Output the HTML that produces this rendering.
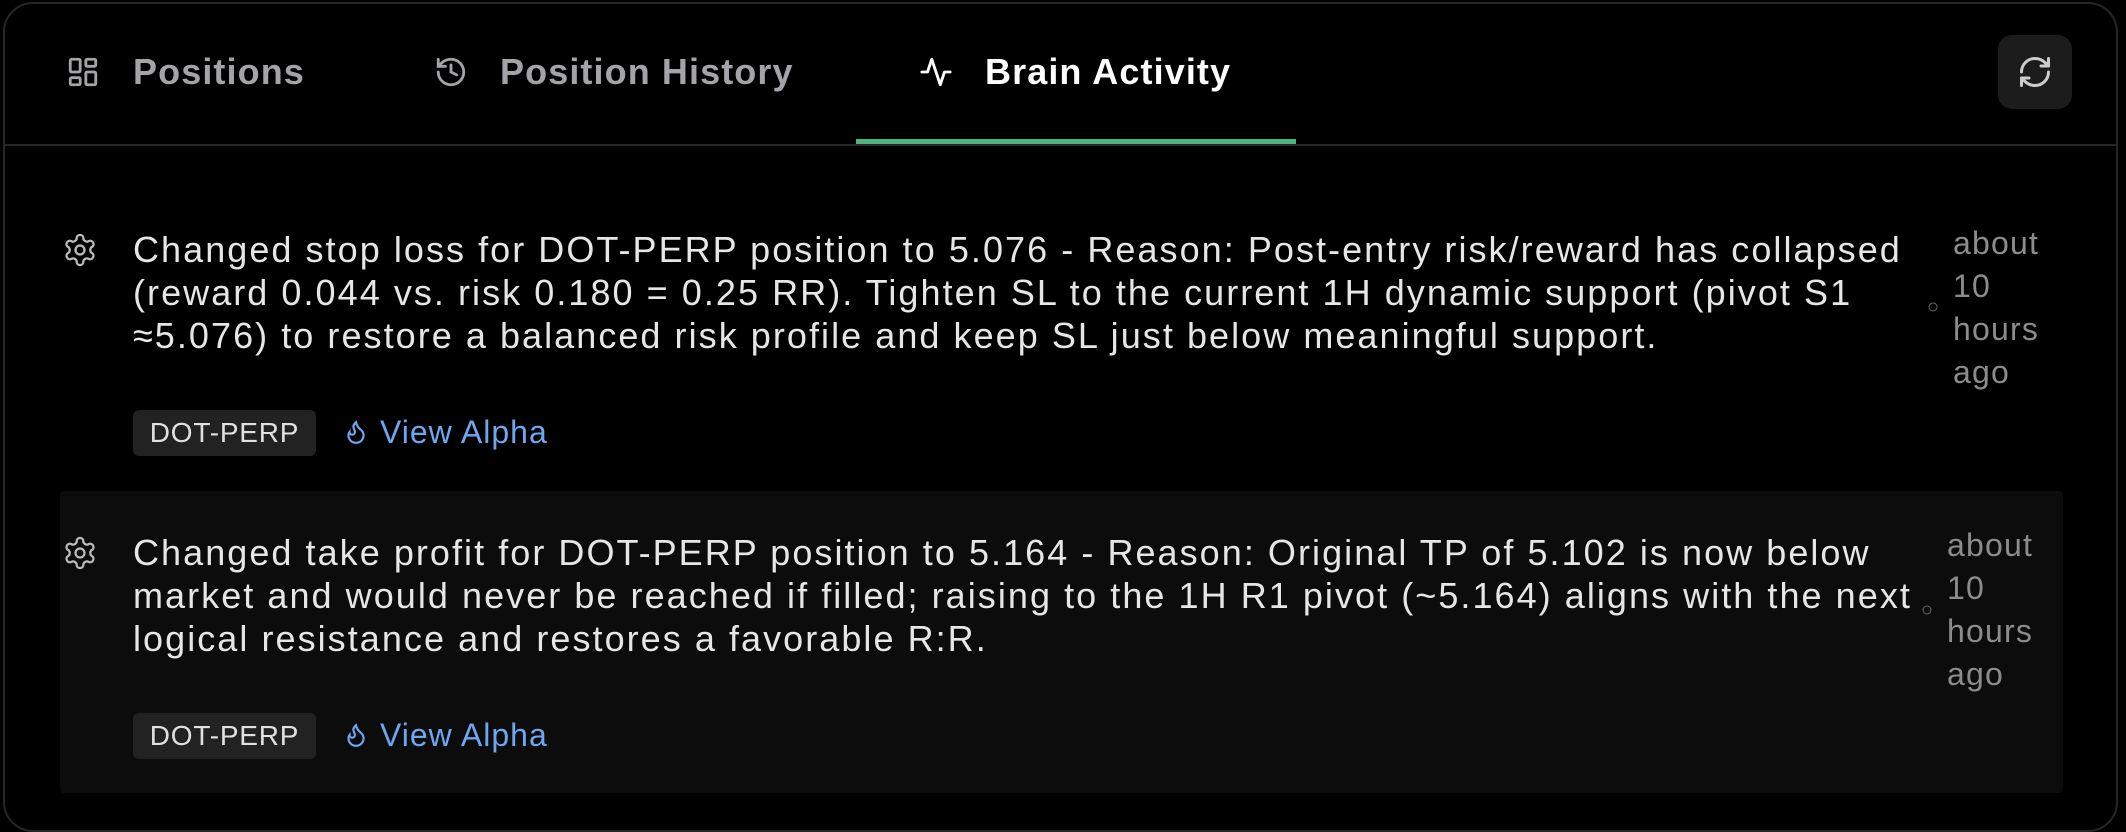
<!DOCTYPE html>
<html><head><meta charset="utf-8"><style>
*{margin:0;padding:0;box-sizing:border-box}
body{width:2126px;height:810px;background:#000;font-family:"Liberation Sans",sans-serif;overflow:hidden;position:relative}
.frame{position:absolute;left:3px;top:2px;width:2115px;height:830px;border:2px solid #262626;border-radius:30px}
.tab{position:absolute;top:51px;font-size:36px;font-weight:bold;color:#a3a3a8;white-space:nowrap;letter-spacing:1.1px}
.tab.active{color:#fff}
.ic{position:absolute}
.under{position:absolute;left:856px;top:139px;width:440px;height:5px;background:#4fb57f}
.div{position:absolute;left:5px;top:144px;width:2111px;height:2px;background:#262626}
.btn{position:absolute;left:1998px;top:35px;width:74px;height:74px;background:#1c1c1c;border-radius:14px}
.line{position:absolute;left:133px;font-size:36px;color:#e6e6e6;white-space:nowrap;letter-spacing:2.05px}
.time{position:absolute;font-size:32px;color:#8c8c8c;letter-spacing:1.2px}
.tag{position:absolute;left:133px;width:183px;height:46px;background:#222;border-radius:6px;color:#e0e0e0;font-size:28px;line-height:46px;text-align:center;letter-spacing:0.8px}
.va{position:absolute;left:380px;font-size:32px;color:#6fa6f0;letter-spacing:1px}
.card{position:absolute;left:60px;top:491px;width:2003px;height:302px;background:#0c0c0c;border-radius:4px}
</style></head><body>
<div class="frame"></div>
<svg class="ic" style="left:66px;top:55px" width="34" height="34" viewBox="0 0 24 24" fill="none" stroke="#a3a3a8" stroke-width="2"><rect x="3" y="3" width="7" height="9" rx="1"/><rect x="14" y="3" width="7" height="5" rx="1"/><rect x="14" y="12" width="7" height="9" rx="1"/><rect x="3" y="16" width="7" height="5" rx="1"/></svg>
<div class="tab" style="left:133px">Positions</div>
<svg class="ic" style="left:434px;top:55px" width="34" height="34" viewBox="0 0 24 24" fill="none" stroke="#a3a3a8" stroke-width="2" stroke-linecap="round"><path d="M3 12a9 9 0 1 0 9-9 9.75 9.75 0 0 0-6.74 2.74L3 8"/><path d="M3 3v5h5"/><path d="M12 7v5l4 2"/></svg>
<div class="tab" style="left:500px">Position History</div>
<svg class="ic" style="left:919px;top:55px" width="34" height="34" viewBox="0 0 24 24" fill="none" stroke="#fff" stroke-width="2" stroke-linecap="round" stroke-linejoin="round"><path d="M22 12h-4l-3 9L9 3l-3 9H2"/></svg>
<div class="tab active" style="left:985px">Brain Activity</div>
<div class="under"></div><div class="div"></div>
<div class="btn"><svg style="position:absolute;left:19px;top:19px" width="36" height="36" viewBox="0 0 24 24" fill="none" stroke="#ccc" stroke-width="2" stroke-linecap="round" stroke-linejoin="round"><path d="M3 12a9 9 0 0 1 9-9 9.75 9.75 0 0 1 6.74 2.74L21 8"/><path d="M21 3v5h-5"/><path d="M21 12a9 9 0 0 1-9 9 9.75 9.75 0 0 1-6.74-2.74L3 16"/><path d="M8 16H3v5"/></svg></div>

<svg class="ic" style="left:62px;top:232px" width="36" height="36" viewBox="0 0 24 24" fill="none" stroke="#bbb" stroke-width="1.5"><path d="M12.22 2h-.44a2 2 0 0 0-2 2v.18a2 2 0 0 1-1 1.73l-.43.25a2 2 0 0 1-2 0l-.15-.08a2 2 0 0 0-2.73.73l-.22.38a2 2 0 0 0 .73 2.73l.15.1a2 2 0 0 1 1 1.72v.51a2 2 0 0 1-1 1.74l-.15.09a2 2 0 0 0-.73 2.73l.22.38a2 2 0 0 0 2.73.73l.15-.08a2 2 0 0 1 2 0l.43.25a2 2 0 0 1 1 1.73V20a2 2 0 0 0 2 2h.44a2 2 0 0 0 2-2v-.18a2 2 0 0 1 1-1.73l.43-.25a2 2 0 0 1 2 0l.15.08a2 2 0 0 0 2.73-.73l.22-.39a2 2 0 0 0-.73-2.73l-.15-.08a2 2 0 0 1-1-1.74v-.5a2 2 0 0 1 1-1.74l.15-.09a2 2 0 0 0 .73-2.73l-.22-.38a2 2 0 0 0-2.73-.73l-.15.08a2 2 0 0 1-2 0l-.43-.25a2 2 0 0 1-1-1.73V4a2 2 0 0 0-2-2z"/><circle cx="12" cy="12" r="3"/></svg>
<div class="line" style="top:229px">Changed stop loss for DOT-PERP position to 5.076 - Reason: Post-entry risk/reward has collapsed</div>
<div class="line" style="top:272px">(reward 0.044 vs. risk 0.180 = 0.25 RR). Tighten SL to the current 1H dynamic support (pivot S1</div>
<div class="line" style="top:315px">≈5.076) to restore a balanced risk profile and keep SL just below meaningful support.</div>
<div class="tag" style="top:410px">DOT-PERP</div>
<svg class="ic" style="left:343px;top:418px" width="26" height="28" viewBox="0 0 24 24" fill="none" stroke="#6fa6f0" stroke-width="2" stroke-linecap="round"><path d="M8.5 14.5A2.5 2.5 0 0 0 11 12c0-1.38-.5-2-1-3-1.07-2.14-.22-4.05 2-6 .5 2.5 2 4.9 4 6.5 2 1.6 3 3.5 3 5.5a7 7 0 1 1-14 0c0-1.15.43-2.29 1-3a2.5 2.5 0 0 0 2.5 2.5z"/></svg>
<div class="va" style="top:414px">View Alpha</div>
<svg class="ic" style="left:1928px;top:302px" width="10" height="10" viewBox="0 0 10 10"><circle cx="5" cy="5" r="4" fill="none" stroke="#666" stroke-width="1"/></svg>
<div class="time" style="left:1953px;top:222px;line-height:43px">about<br>10<br>hours<br>ago</div>

<div class="card"></div>
<svg class="ic" style="left:62px;top:535px" width="36" height="36" viewBox="0 0 24 24" fill="none" stroke="#bbb" stroke-width="1.5"><path d="M12.22 2h-.44a2 2 0 0 0-2 2v.18a2 2 0 0 1-1 1.73l-.43.25a2 2 0 0 1-2 0l-.15-.08a2 2 0 0 0-2.73.73l-.22.38a2 2 0 0 0 .73 2.73l.15.1a2 2 0 0 1 1 1.72v.51a2 2 0 0 1-1 1.74l-.15.09a2 2 0 0 0-.73 2.73l.22.38a2 2 0 0 0 2.73.73l.15-.08a2 2 0 0 1 2 0l.43.25a2 2 0 0 1 1 1.73V20a2 2 0 0 0 2 2h.44a2 2 0 0 0 2-2v-.18a2 2 0 0 1 1-1.73l.43-.25a2 2 0 0 1 2 0l.15.08a2 2 0 0 0 2.73-.73l.22-.39a2 2 0 0 0-.73-2.73l-.15-.08a2 2 0 0 1-1-1.74v-.5a2 2 0 0 1 1-1.74l.15-.09a2 2 0 0 0 .73-2.73l-.22-.38a2 2 0 0 0-2.73-.73l-.15.08a2 2 0 0 1-2 0l-.43-.25a2 2 0 0 1-1-1.73V4a2 2 0 0 0-2-2z"/><circle cx="12" cy="12" r="3"/></svg>
<div class="line" style="top:532px">Changed take profit for DOT-PERP position to 5.164 - Reason: Original TP of 5.102 is now below</div>
<div class="line" style="top:575px">market and would never be reached if filled; raising to the 1H R1 pivot (~5.164) aligns with the next</div>
<div class="line" style="top:618px">logical resistance and restores a favorable R:R.</div>
<div class="tag" style="top:713px">DOT-PERP</div>
<svg class="ic" style="left:343px;top:721px" width="26" height="28" viewBox="0 0 24 24" fill="none" stroke="#6fa6f0" stroke-width="2" stroke-linecap="round"><path d="M8.5 14.5A2.5 2.5 0 0 0 11 12c0-1.38-.5-2-1-3-1.07-2.14-.22-4.05 2-6 .5 2.5 2 4.9 4 6.5 2 1.6 3 3.5 3 5.5a7 7 0 1 1-14 0c0-1.15.43-2.29 1-3a2.5 2.5 0 0 0 2.5 2.5z"/></svg>
<div class="va" style="top:717px">View Alpha</div>
<svg class="ic" style="left:1922px;top:605px" width="10" height="10" viewBox="0 0 10 10"><circle cx="5" cy="5" r="4" fill="none" stroke="#666" stroke-width="1"/></svg>
<div class="time" style="left:1947px;top:524px;line-height:43px">about<br>10<br>hours<br>ago</div>
</body></html>
